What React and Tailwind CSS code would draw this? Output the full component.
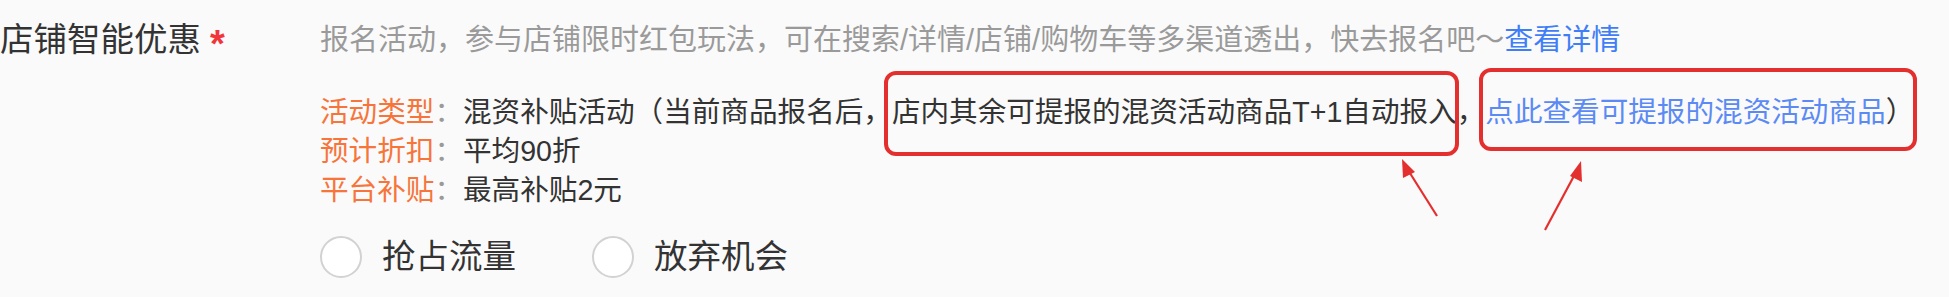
import React from 'react'

const Label = ({ children }) => (
  <>
    <span className='text-[#f7743b]'>{children}</span>
    <span className='text-[#9a9a9a]'>：</span>
  </>
)

// red annotation frame drawn around a piece of text
const Boxed = ({ children, className = '', frame }) => (
  <span className={`relative inline-block ${className}`}>
    {children}
    <span className={`pointer-events-none absolute rounded-[12px] border-[4px] border-[#e3302f] ${frame}`} />
  </span>
)

const Radio = ({ label, className = '' }) => (
  <label className={`flex items-center ${className}`}>
    <span className='h-[42px] w-[42px] rounded-full border-[2.5px] border-[#d2d2d2] bg-white' />
    <span className='ml-[20px] text-[33.5px] leading-[42px] text-[#333]'>{label}</span>
  </label>
)

export default function App() {
  return (
    <div className="relative h-[297px] w-full overflow-hidden bg-[#fafafa] font-['Liberation_Sans','Noto_Sans_CJK_SC',sans-serif]">
      <div className='flex items-start pt-[20px]'>
        <div className='flex h-[40px] w-[320px] shrink-0 items-center text-[33.5px] leading-[40px] text-[#333] whitespace-nowrap'>
          店铺智能优惠
          <span className='ml-[9px] translate-y-[4px] text-[38px] font-bold text-[#f0363a]'>*</span>
        </div>

        <div className='flex flex-col'>
          <p className='whitespace-nowrap text-[29px] leading-[40px] text-[#9a9a9a]'>
            报名活动，参与店铺限时红包玩法，可在搜索/详情/店铺/购物车等多渠道透出，快去报名吧～
            <span className='text-[#3f7ef6]'>查看详情</span>
          </p>

          <div className='mt-[33px] text-[28.6px] leading-[39px] text-[#333]'>
            <p className='whitespace-nowrap'>
              <Label>活动类型</Label>
              混资补贴活动（当前商品报名后，
              <Boxed frame='-left-[8px] -right-[2px] -top-[22px] -bottom-[24px]'>
                店内其余可提报的混资活动商品T+1自动报入
              </Boxed>
              ，
              <Boxed frame='-left-[6px] -right-[3px] -top-[25px] -bottom-[19px]'>
                <span className='text-[#5b8af4]'>点此查看可提报的混资活动商品</span>）
              </Boxed>
            </p>
            <p className='whitespace-nowrap'>
              <Label>预计折扣</Label>平均90折
            </p>
            <p className='whitespace-nowrap'>
              <Label>平台补贴</Label>最高补贴2元
            </p>
          </div>

          <div className='mt-[26px] flex items-center'>
            <Radio label='抢占流量' />
            <Radio label='放弃机会' className='ml-[76px]' />
          </div>
        </div>
      </div>

      {/* annotation arrows */}
      <svg className='pointer-events-none absolute left-0 top-0' width='1949' height='297' viewBox='0 0 1949 297'>
        <g stroke='#e3302f' strokeWidth='2.2' fill='#e3302f'>
          <line x1='1437' y1='216' x2='1408' y2='170' />
          <polygon points='1402,159 1415,172 1403,178' stroke='none' />
          <line x1='1545' y1='230' x2='1575' y2='174' />
          <polygon points='1581,161 1582,182 1570,176' stroke='none' />
        </g>
      </svg>
    </div>
  )
}
